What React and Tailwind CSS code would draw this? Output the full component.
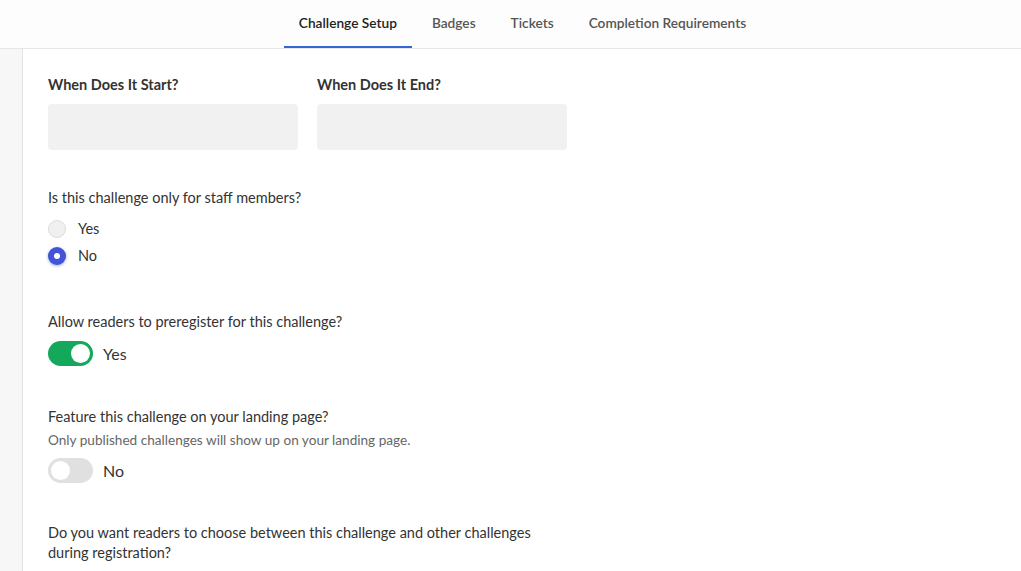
import { useState } from "react";

const tabs = ["Challenge Setup", "Badges", "Tickets", "Completion Requirements"];

const Toggle = ({ on, label, onClick }) => (
  <div className="flex items-center gap-[10px] h-[25px]">
    <button
      onClick={onClick}
      className={`relative w-[45px] h-[25px] rounded-full ${on ? "bg-[#14a85a]" : "bg-[#e0e0e0]"}`}
    >
      <span
        className={`absolute top-[3px] w-[19px] h-[19px] rounded-full bg-white ${on ? "left-[23px]" : "left-[3px]"}`}
      />
    </button>
    <span className="text-[16px] text-[#333]">{label}</span>
  </div>
);

const App = () => {
  const [staff, setStaff] = useState("No");
  const [prereg, setPrereg] = useState(true);
  const [featured, setFeatured] = useState(false);

  return (
    <div className="min-h-screen bg-white font-['Lato',sans-serif] text-[#333]">
      <div className="h-[49px] border-b border-[#e6e6e6] bg-[#fdfdfd] flex justify-center">
        <div className="flex h-full gap-[5px] ml-[24px]">
          {tabs.map((t, i) => (
            <div
              key={t}
              className={`h-full px-[15px] flex items-center text-[13.7px] font-semibold border-b-2 ${
                i === 0 ? "text-[#222] border-[#3367d6]" : "text-[#555] border-transparent"
              }`}
            >
              {t}
            </div>
          ))}
        </div>
      </div>

      <div className="flex">
        <div className="w-[23px] shrink-0 bg-[#f7f7f7] border-r border-[#e3e3e3] min-h-[522px]" />
        <div className="pl-[25px] pt-[27px]">
          <div className="flex gap-[19px]">
            <div>
              <div className="text-[14.5px] font-bold text-[#333] leading-[18px]">When Does It Start?</div>
              <div className="mt-[10px] w-[250px] h-[46px] rounded bg-[#f1f1f1]" />
            </div>
            <div>
              <div className="text-[14.5px] font-bold text-[#333] leading-[18px]">When Does It End?</div>
              <div className="mt-[10px] w-[250px] h-[46px] rounded bg-[#f1f1f1]" />
            </div>
          </div>

          <div className="mt-[39px] text-[14.5px] leading-[18px]">Is this challenge only for staff members?</div>
          <div className="mt-[13px] flex flex-col gap-[9px]">
            {["Yes", "No"].map((o) => (
              <label key={o} className="flex items-center gap-[12px] h-[18px] cursor-pointer" onClick={() => setStaff(o)}>
                {staff === o ? (
                  <span className="w-[18px] h-[18px] rounded-full bg-[#4353d8] flex items-center justify-center shadow-[0_1px_3px_rgba(67,83,216,0.5)]">
                    <span className="w-[6px] h-[6px] rounded-full bg-white" />
                  </span>
                ) : (
                  <span className="w-[18px] h-[18px] rounded-full bg-[#f0f0f0] border border-[#dcdcdc]" />
                )}
                <span className="text-[14.5px]">{o}</span>
              </label>
            ))}
          </div>

          <div className="mt-[48px] text-[14.5px] leading-[18px]">Allow readers to preregister for this challenge?</div>
          <div className="mt-[10px]">
            <Toggle on={prereg} label={prereg ? "Yes" : "No"} onClick={() => setPrereg(!prereg)} />
          </div>

          <div className="mt-[42px] text-[14.5px] leading-[18px]">Feature this challenge on your landing page?</div>
          <div className="mt-[5px] text-[13.6px] leading-[18px] text-[#666]">Only published challenges will show up on your landing page.</div>
          <div className="mt-[9px]">
            <Toggle on={featured} label={featured ? "Yes" : "No"} onClick={() => setFeatured(!featured)} />
          </div>

          <div className="mt-[40px] w-[500px] text-[14.5px] leading-[20px]">
            Do you want readers to choose between this challenge and other challenges during registration?
          </div>
        </div>
      </div>
    </div>
  );
};

export default App;
